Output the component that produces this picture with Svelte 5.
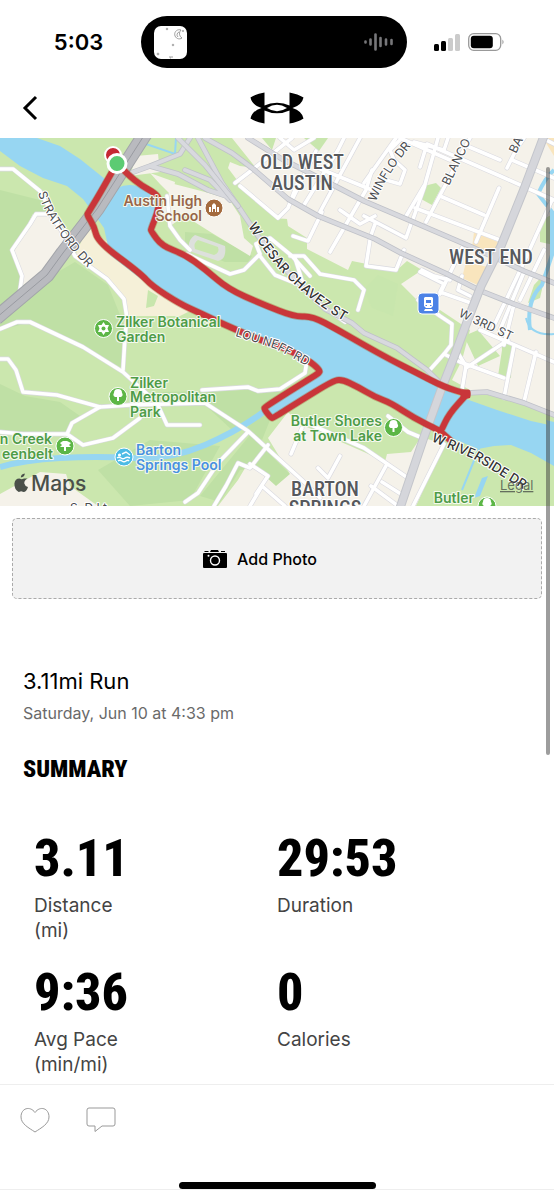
<script>
  const stats = [
    { value: '3.11', label: 'Distance', unit: '(mi)' },
    { value: '29:53', label: 'Duration', unit: '' },
    { value: '9:36', label: 'Avg Pace', unit: '(min/mi)' },
    { value: '0', label: 'Calories', unit: '' }
  ];

  const parks = [
    'M0 190L40 200 68 250 40 284 0 310Z',
    'M75 262L108 285 124 325 122 368 32 322 0 330V312L44 280Z',
    'M0 384L25 396 60 402 80 416 64 436 0 432Z',
    'M160 392L250 390 284 392 258 415 232 430 204 404Z',
    'M258 412L270 420 262 440 246 430Z',
    'M250 435L290 474 276 486 256 468 240 470 220 502 200 496Z',
    'M98 470L150 440 220 446 190 500 130 506Z',
    'M185 232L212 234 252 256 248 262 225 262 185 246Z',
    'M300 325L325 332 310 318Z'
  ];

  const blocks = [
    'M232 138H554V412L500 398 470 390 452 380 462 360 470 330 440 310 416 299 401 284 422 270 407 261 397 270 352 261 348 270 307 249 307 238 288 226 287 219 275 218 240 184 228 168 230 162 240 166 256 168Z',
    'M136 156L158 154 160 172 130 176Z',
    'M150 173L175 182 172 196 160 184Z',
    'M174 184L205 192 229 199 240 216 244 238 253 246 250 256 212 233 185 216 170 226 158 212Z',
    'M33 214L47 214 70 239 43 273 22 286 22 276 12 256 20 239Z',
    'M288 412L268 438 290 474 276 486 256 468 248 463 238 480 218 506H416L444 444 421 437 411 452 387 454 385 462 364 452 300 424Z',
    'M0 506V494L40 472 66 474 70 486 98 506Z'
  ];

  const greens = [
    'M424 186L436 183 441 188 432 205 421 199Z',
    'M500 324L512 346 511 378 498 376 502 350Z',
    'M464 336L478 330 500 356 478 366Z',
    'M378 275L398 284 393 316 372 308 364 290Z',
    'M540 220L554 214V245L540 242Z',
    'M534 285L546 272 540 298 528 303Z',
    'M262 138H276L272 150Z',
    'M304 138H328L319 151Z'
  ];

  // Local streets, drawn white on a thin grey edge
  const streets = [
    'M0 169H13L40 191 75 256 107 279 124 299 127 318 125 337 123 370',
    'M70 243L50 214 36 214 30 224 12 250 22 276 20 290',
    'M0 329L17 322 30 322 83 347 123 372 157 403 167 425H200',
    'M0 359H8L16 370 23 392 57 395 100 407 130 405 205 403 248 431 302 480 320 498',
    'M100 407L72 423 67 434 83 445 113 438 140 418',
    'M0 432L23 434 67 434',
    'M202 390L248 387 258 391 280 389 305 373 307 360',
    'M248 432L218 463 198 493 185 502',
    'M268 445L250 468 238 463 226 486 214 506',
    'M256 494L268 476 250 464M250 506L262 486 285 506',
    'M291 454L302 428M300 420L364 448 408 478',
    'M318 468L328 478 340 456M387 464L364 506M382 482L404 496',
    'M444 444L413 506M371 486L398 506',
    'M235 183L252 170 292 138M240 186L278 218 288 208 298 182',
    'M304 205L338 150 344 138M320 212L360 138',
    'M292 200L316 151M330 252L366 190 372 170M293 236L308 241 322 212',
    'M340 210L360 224 375 216M318 168L372 190M280 138L294 150 314 138',
    'M364 183L396 138M386 180L400 184 405 170 394 160 390 150 402 138',
    'M364 216L406 238 412 221M370 238L375 224M370 240L366 266 396 270 404 250',
    'M412 222L424 188 438 138M426 222L470 138M405 218L424 186',
    'M420 167L427 144 500 176 554 200M400 138L450 160M448 138L444 150 414 142',
    'M440 196L484 215M415 208L500 240M476 242L499 188',
    'M467 146L500 160M507 168L516 150 524 138M512 160L554 178',
    'M552 200L525 260 492 330M524 272L500 330M544 250L520 300',
    'M422 270L434 276 450 280M440 294L462 248M420 272L444 284 440 292 474 304',
    'M462 276L458 290 470 296M514 304L504 345',
    'M418 300L440 316 452 324 451 345 444 354 428 372M444 354L460 362 504 378',
    'M456 350L466 366 462 390M466 368L508 340M480 330L554 362',
    'M514 346L504 398M536 352L524 402M542 138L554 144',
    'M187 254L230 274 244 270 260 254 256 244 270 238 292 256 310 276M290 256L304 256 320 274 354 280 364 290 358 310M260 256L275 275 300 285 320 304 345 322',
    'M295 258L305 290M167 196L170 226 180 240 190 250',
    'M388 416L408 432 420 437'
  ];

  // Wider grey roads
  const avenues = [
    'M198 138L222 183 238 206 258 236 285 269 325 309 352 323 364 333 397 348 427 370 444 387 466 393 487 392 524 403 554 415',
    'M205 138L232 153 252 168 288 199 318 216 375 239 401 253 447 274 481 291 514 304 554 318',
    'M248 138L282 159 335 186 364 201 411 221 474 248 524 271 554 283',
    'M128 174L150 166 178 174 208 190 226 196M150 166L180 154 190 138M185 170L210 180 230 200',
    'M178 138L205 165 238 206'
  ];

  const north = [[117,163],[127,174],[142,186],[155,193],[160,200],[157,214],[151,229],[151,231],[162,246],[184,254],[205,269],[228,289],[262,304],[295,317],[312,316],[338,330],[364,345],[391,360],[417,373],[444,387],[467,394]];
  const south = [[117,163],[102,190],[88,213],[87,215],[94,226],[98,242],[140,273],[152,286],[180,304],[200,313],[225,325],[265,342],[285,348],[308,360],[320,370],[319,373],[311,378],[290,391],[265,407],[264,409],[271,418],[273,418],[300,401],[331,382],[341,379],[358,387],[375,397],[391,403],[414,418],[440,431],[441,431],[449,414],[467,394]];

  // Rounds the corners of a polyline by curving through its midpoints
  function smooth(points) {
    let d = `M${points[0]}`;
    for (let i = 1; i < points.length - 1; i++) {
      const [x, y] = points[i];
      const [nx, ny] = points[i + 1];
      d += `Q${x} ${y} ${(x + nx) / 2} ${(y + ny) / 2}`;
    }
    return `${d}L${points[points.length - 1]}`;
  }
  const route = `${smooth(north)}${smooth(south)}M441 432L450 440`;
</script>

<div class="screen">
  <header>
    <div class="status">
      <time>5:03</time>
      <div class="island">
        <svg class="thumb" viewBox="0 0 33 33" aria-hidden="true">
          <rect width="33" height="33" rx="7" fill="#fff" />
          <g fill="none" stroke="#888" stroke-width=".8">
            <path d="M27 4a4.6 4.6 0 1 0 1 8 5 5 0 0 1-1-8Z" />
            <path d="M25 6a3 3 0 0 0-1 5" />
            <circle cx="13" cy="3" r=".8" /><circle cx="19" cy="19" r=".8" />
            <circle cx="4" cy="28" r=".9" /><circle cx="29" cy="5" r=".6" /><path d="M15 31h4M16 32h1" />
          </g>
        </svg>
        <svg class="wave" viewBox="0 0 30 18" aria-hidden="true">
          <path d="M1.500 8.500v1M6.500 6.500v5M11.500 1.500v15M16.500 5v8M22 6.500v5M27.500 7v4" stroke="#77777a" stroke-width="2.600" stroke-linecap="round" />
        </svg>
      </div>
      <div class="signals">
        <svg width="26" height="17" viewBox="0 0 26 17" aria-hidden="true">
          <rect y="10" width="5" height="7" rx="1.500" /><rect x="7" y="7" width="5" height="10" rx="1.500" />
          <g fill="#cbcbcb"><rect x="14" y="4" width="5" height="13" rx="1.500" /><rect x="21" width="5" height="17" rx="1.500" /></g>
        </svg>
        <svg width="37" height="18" viewBox="0 0 37 18" aria-hidden="true">
          <rect x=".7" y=".7" width="32" height="16.600" rx="5" fill="none" stroke="#999" stroke-width="1.300" />
          <rect x="2.800" y="2.800" width="22" height="12.400" rx="3" /><path d="M34.500 6.500q2 2.500 0 5Z" fill="#888" />
        </svg>
      </div>
    </div>
    <nav>
      <button class="plain" aria-label="Back">
        <svg width="16" height="26" viewBox="0 0 16 26"><path d="M14 2L3 13l11 11" fill="none" stroke="#000" stroke-width="3" /></svg>
      </button>
      <svg width="54" height="32" viewBox="0 0 54 32" aria-hidden="true">
        <path d="M14.500.500Q6 2 .500 5.500Q2 13 11.500 16Q2 19 .500 26.500Q6 30 14.500 31.500V18.500Q20 21.200 27 21.200T39.500 18.500V31.500Q48 30 53.500 26.500Q52 19 42.500 16Q52 13 53.500 5.500Q48 2 39.500.500V13.500Q34 10.800 27 10.800T14.500 13.500Z" />
        <path d="M17 16q10-6.500 20 0q-10 6.500-20 0Z" fill="#fff" />
      </svg>
    </nav>
  </header>

  <svg class="map" viewBox="0 138 554 368" role="img" aria-label="Route map">
    <rect y="138" width="554" height="368" fill="#cbe7ae" />
    {#each parks as d}<path {d} fill="#bfe0a5" />{/each}
    {#each blocks as d}<path {d} fill="#f5f2ea" />{/each}
    {#each greens as d}<path {d} fill="#c8e6ad" />{/each}
    <path d="M88 226L190 311 180 316 127 316 123 296 100 273 75 256Z" fill="#f5f0d8" />
    <path d="M148 290L158 296 154 306 146 308Z" fill="#c8e6ad" />
    <path d="M474 232L498 242 492 258 472 248ZM466 262L492 268 480 286 462 278ZM543 138H554V156Z" fill="#f9e5bd" />
    <path d="M195 235L225 246Q227 259 218 261L189 251Q187 240 195 235Z" fill="#dde0dc" />
    <path d="M198 240L218 247Q220 253 214 255L195 249Q193 243 198 240Z" fill="#c8e6ad" />

    <g fill="#97d6f2">
      <path d="M0 138H37L60 146 80 159 110 183 117 188Q134 180 150 193L160 206 152 226 163 246 184 254 205 269 228 289 262 304 295 316 312 315 338 330 364 345 391 360 444 388 466 399 497 410 531 421 554 426V466L531 453 511 445 494 446 478 449 454 439 441 432 391 403 340 380 272 418 262 407 318 372 308 360 265 342 225 325 180 304 150 286 110 255 104 228 92 211 83 199 67 186 43 178 20 166 0 151Z" />
      <path d="M482 478L488 476 480 496 474 498ZM546 420l8 2v10l-6-4Z" />
    </g>
    <g fill="none" stroke="#97d6f2">
      <path d="M266 410Q240 430 205 445T133 458 60 458 0 467" stroke-width="6" />
      <path d="M554 170Q545 178 538 194L552 212V255L542 285Q526 300 530 330" stroke-width="4" />
      <path d="M526 318q4 18 28 16M480 446L462 490M146 144L175 154 176 138" stroke-width="2" />
    </g>

    <g fill="none" stroke-linejoin="round" stroke-linecap="round">
      {#each streets as d}<path {d} stroke="#dadae0" stroke-width="4.800" />{/each}
      {#each streets as d}<path {d} stroke="#fff" stroke-width="3.600" />{/each}
      {#each avenues as d}<path {d} stroke="#bfc1c8" stroke-width="5.500" /><path {d} stroke="#d8d9de" stroke-width="4" />{/each}
      <g stroke-linecap="butt">
        <path d="M544 136L524 189 501 246 481 286 467 322 454 357 441 390 424 437 400 508" stroke="#c3c5cb" stroke-width="9" />
        <path d="M544 136L524 189 501 246 481 286 467 322 454 357 441 390 424 437 400 508" stroke="#d5d6db" stroke-width="7" />
        <path d="M145 134L97 209 63 253 47 275-4 318" stroke="#a3a5aa" stroke-width="15" />
        <path d="M145 134L97 209 63 253 47 275-4 318" stroke="#b9babf" stroke-width="13" />
        <path d="M145 134L97 209 63 253 47 275-4 318" stroke="#999ba1" stroke-width="1" />
      </g>
      <path d={route} stroke="#a96c3f" stroke-opacity=".45" stroke-width="7.500" />
      <path d={route} stroke="#c9363a" stroke-width="6" />
      <path d="M463 392h5v4h-5Z" stroke="#c9363a" stroke-width="5" fill="#c9363a" />
    </g>
    <circle cx="113" cy="155" r="8" fill="#c52833" stroke="#fff" stroke-width="2" />
    <circle cx="117" cy="163.500" r="9" fill="#5ccb73" stroke="#fff" stroke-width="3" />

    <defs>
      <path id="stratford" d="M38 193Q50 231 96 276" />
      <path id="cesar" d="M248 226Q291 299 370 334" />
      <path id="neff" d="M235 336L274 348 318 372" />
      <path id="winflo" d="M376 202Q386 174 416 140" />
      <path id="blanco" d="M449 186L476 130" />
      <path id="third" d="M458 316L520 345" />
      <path id="riverside" d="M431 441L472 458 544 502" />
      <path id="ba" d="M516 154L528 130" />
    </defs>

    <g class="road">
      <text><textPath href="#stratford">STRATFORD DR</textPath></text>
      <text class="strong"><textPath href="#cesar">W CESAR CHAVEZ ST</textPath></text>
      <text><textPath href="#neff">LOU NEFF RD</textPath></text>
      <text><textPath href="#winflo">WINFLO DR</textPath></text>
      <text><textPath href="#blanco">BLANCO</textPath></text>
      <text><textPath href="#third">W 3RD ST</textPath></text>
      <text><textPath href="#ba">BA</textPath></text>
      <text class="strong"><textPath href="#riverside">W RIVERSIDE DR</textPath></text>
      <text x="70" y="512">S. D Lt</text>
    </g>
    <g class="district">
      <text x="302" y="169">OLD WEST</text><text x="302" y="190">AUSTIN</text>
      <text x="491" y="264">WEST END</text>
      <text x="325" y="496">BARTON</text><text x="325" y="515">SPRINGS</text>
    </g>
    <g class="place">
      <g fill="#98664a" text-anchor="end"><text x="202" y="206">Austin High</text><text x="202" y="221">School</text></g>
      <g fill="#4e9c48">
        <text x="116" y="327">Zilker Botanical</text><text x="116" y="342">Garden</text>
        <text x="130" y="388">Zilker</text><text x="130" y="402">Metropolitan</text><text x="130" y="417">Park</text>
        <g text-anchor="end"><text x="382" y="426">Butler Shores</text><text x="382" y="441">at Town Lake</text>
          <text x="52" y="444">n Creek</text><text x="53" y="459">eenbelt</text><text x="474" y="503">Butler</text></g>
      </g>
      <g fill="#4991df"><text x="136" y="455">Barton</text><text x="136" y="470">Springs Pool</text></g>
    </g>

    <g stroke="#fff">
      <circle cx="214" cy="208" r="9" fill="#a46b3e" />
      <g fill="#5cb646"><circle cx="103.500" cy="328.500" r="9" /><circle cx="118" cy="396.500" r="9" /><circle cx="65" cy="446" r="9" /><circle cx="393.500" cy="427.500" r="9" /><circle cx="487" cy="506" r="9" /></g>
      <circle cx="124" cy="457" r="9" fill="#4dbbe5" />
      <rect x="418" y="293" width="21" height="21" rx="4" fill="#4c82e6" />
    </g>
    <g fill="#fff">
      <path d="M209 212v-5h2v5Zm3 0v-7l2-2 2 2v7h-1v-3h-2v3Zm5 0v-5h2v5Z" />
      {#each [[118, 396], [393.5, 427], [487, 505]] as [x, y]}
        <path d={`M${x - 1} ${y + 5}v-4h-2a2.500 2.500 0 0 1-1-4 4 4 0 0 1 8 0 2.500 2.500 0 0 1-1 4h-2v4Z`} />
      {/each}
      <path d="M64 451v-4h-4l2-2-2-2 3-2h4l4 2-2 2 2 2h-5v4Z" />
      <path d="M103.500 322l2 3 3.500 0-1.500 3.500 1.500 3.500h-3.500l-2 3-2-3H98l1.500-3.500L98 325h3.500Z" />
      <circle cx="119.500" cy="455" r="1.600" />
      <path d="M122 454l4-2 4 3M117 458q2-1.500 4 0t4 0 5 0M118 461q2-1.500 4 0t4 0 3 0" fill="none" stroke="#fff" stroke-width="1.400" />
      <path d="M425 297h7l1 1v8l-2 2h-5l-2-2v-8ZM425 309h7l1 2h-9Z" />
    </g>
    <circle cx="103.500" cy="328.500" r="2" fill="#5cb646" />
    <path d="M426 300h5v3h-5ZM425.500 305h1.500v1h-1.500ZM430 305h1.500v1H430Z" fill="#4c82e6" />
    <g fill="#4a504a">
      <path d="M27.500 478.500q-3.500 2-3.200 5 .4 2.400 3.700 3.500-1.500 5-4.500 5l-2.300-.7-2.500.700q-4.500-2.500-4.300-8.500 .7-5 5-5l2.300.8 2.400-.9q2.300 0 3.400.1ZM20.800 477.500q0-3.500 4-4 0 3.500-4 4Z" />
      <text class="brand" x="31" y="491">Maps</text>
      <text class="legal" x="500" y="490">Legal</text>
    </g>
  </svg>

  <main>
    <button class="photo">
      <svg width="24" height="18" viewBox="0 0 24 18" aria-hidden="true">
        <path d="M1.500 1h4v1h-4ZM18 1h4v1h-4ZM8 0h7l1 2H7ZM1 3h22q1 0 1 1v13q0 1-1 1H1q-1 0-1-1V4q0-1 1-1Z" />
        <circle cx="12" cy="10.500" r="4.500" fill="none" stroke="#fff" stroke-width="1.400" /><circle cx="5.500" cy="5.800" r="1" fill="#fff" />
      </svg>
      Add Photo
    </button>
    <h1>3.11mi Run</h1>
    <p class="date">Saturday, Jun 10 at 4:33 pm</p>
    <h2>SUMMARY</h2>
    <dl>
      {#each stats as s}
        <div><dd>{s.value}</dd><dt>{s.label}{#if s.unit}<br />{s.unit}{/if}</dt></div>
      {/each}
    </dl>
  </main>

  <footer>
    <div class="actions">
      <button class="plain" aria-label="Like">
        <svg width="30" height="26" viewBox="0 0 30 26"><path d="M15 5.500C10-1.500 1 1 1 10c0 7 8 11 14 15C21 21 29 17 29 10 29 1 20-1.500 15 5.500Z" /></svg>
      </button>
      <button class="plain" aria-label="Comment">
        <svg width="30" height="26" viewBox="0 0 30 26"><path d="M3 1h24q2 0 2 2v14q0 2-2 2H16l-7 5.500V19H3q-2 0-2-2V3q0-2 2-2Z" /></svg>
      </button>
    </div>
    <div class="home"></div>
  </footer>
  <div class="scrollbar"></div>
</div>

<style>
  :global(body) { margin: 0; background: #fff; }
  .screen { position: relative; min-height: 100vh; display: flex; flex-direction: column; font-family: Inter, "Liberation Sans", sans-serif; color: #000; }
  svg { display: block; }
  button { font: inherit; color: inherit; cursor: pointer; }
  .plain { border: 0; padding: 0; background: none; }
  .status { display: grid; grid-template-columns: 1fr auto 1fr; align-items: center; padding: 16px 6px 0 0; }
  .status time { padding-left: 16px; text-align: center; font-size: 22px; font-weight: 600; line-height: 28px; }
  .island { display: flex; align-items: center; justify-content: space-between; box-sizing: border-box; width: 266px; height: 52px; padding: 0 13px; border-radius: 26px; background: #000; }
  .thumb { width: 33px; height: 33px; }
  .wave { width: 30px; height: 18px; }
  .signals { display: flex; gap: 8px; align-items: center; padding-left: 27px; }
  nav { display: grid; grid-template-columns: 1fr auto 1fr; align-items: center; box-sizing: border-box; height: 70px; padding: 10px 22px 0; }
  .map { width: 100%; height: auto; }
  .map text { paint-order: stroke; stroke-linejoin: round; }
  .road text { font-size: 12px; fill: #4b4d50; stroke: #fff; stroke-width: 2px; }
  .road .strong { font-size: 13px; font-weight: 500; fill: #333; }
  .district text { font-family: "Roboto Condensed", Roboto, sans-serif; font-size: 20px; font-weight: 500; text-anchor: middle; fill: #57595d; stroke: #fff; stroke-width: 2px; }
  .place text { font-size: 14px; font-weight: 600; stroke: #f6faef; stroke-width: 2px; }
  .map .brand { font-size: 21px; font-weight: 500; }
  .map .legal { font-size: 13px; text-decoration: underline; fill-opacity: .8; }
  main { flex: 1; padding: 12px 12px 0; }
  .photo { display: flex; align-items: center; justify-content: center; gap: 10px; width: 100%; height: 81px; padding: 0 34px 0 0; border: 1px dashed #aaa; border-radius: 5px; background: #f2f2f2; font-size: 16px; font-weight: 500; }
  h1 { margin: 68px 11px 0; font-size: 22px; font-weight: 400; line-height: 28px; }
  .date { margin: 6px 11px 0; font-size: 16px; line-height: 24px; color: #6a6a6a; }
  h2 { margin: 28px 11px 0; font-family: "Roboto Condensed", Roboto, sans-serif; font-size: 24px; font-weight: 900; line-height: 32px; }
  dl { display: grid; grid-template-columns: 243px 1fr; row-gap: 18px; margin: 42px 22px 0; }
  dd { margin: 0 0 2px; font-family: "Roboto Condensed", Roboto, sans-serif; font-size: 52px; font-weight: 800; line-height: 64px; }
  dt { font-size: 19px; line-height: 25px; color: #444; }
  footer { flex: none; height: 115px; border-top: 1px solid #eee; display: flex; flex-direction: column; justify-content: space-between; }
  .actions { display: flex; gap: 36px; padding: 22px 20px 0; }
  .actions path { fill: none; stroke: #999; stroke-width: 1; }
  .home { margin-bottom: 10px; border-bottom: 1px solid #eee; }
  .home::before { content: ""; display: block; width: 197px; height: 7px; margin: 0 auto; border-radius: 4px; background: #000; }
  .scrollbar { position: absolute; right: 4px; top: 167px; width: 4px; height: 588px; border-radius: 2px; background: rgb(60 60 60 / 50%); }
</style>
